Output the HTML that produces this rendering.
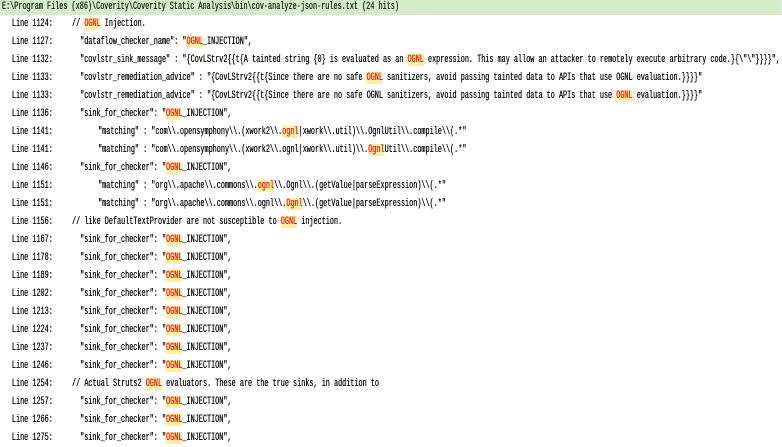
<!DOCTYPE html>
<html><head><meta charset="utf-8"><style>
html,body{margin:0;padding:0;background:#fff;width:782px;height:445px;overflow:hidden}
#w{position:absolute;left:0;top:0;width:1261px;transform:scaleX(0.62);transform-origin:0 0;font-family:"Liberation Mono",monospace;font-size:11px;color:#111;overflow:hidden;text-shadow:0.4px 0 0 currentColor}
.h{background:#d3ecc9;height:15px;line-height:15px;padding-left:3px;color:#1a2a1a;font-size:11px}
.l{height:18px;line-height:18px;white-space:pre;position:relative}
.n{position:absolute;left:19px}
.c{position:absolute;left:116px}
.c2{position:absolute;left:129px}
.c3{position:absolute;left:158px}
b{font-weight:normal;color:#e0241a;background:#fff0a0}
</style></head><body><div id="w">
<div class="h">E:\Program Files (x86)\Coverity\Coverity Static Analysis\bin\cov-analyze-json-rules.txt (24 hits)</div>
<div class="l"><span class="n">Line 1124:</span><span class="c">// <b>OGNL</b> Injection.</span></div>
<div class="l"><span class="n">Line 1127:</span><span class="c2">"dataflow_checker_name": "<b>OGNL</b>_INJECTION",</span></div>
<div class="l"><span class="n">Line 1132:</span><span class="c2">"covlstr_sink_message" : "{CovLStrv2{{t{A tainted string {0} is evaluated as an <b>OGNL</b> expression. This may allow an attacker to remotely execute arbitrary code.}{\"\"}}}}",</span></div>
<div class="l"><span class="n">Line 1133:</span><span class="c2">"covlstr_remediation_advice" : "{CovLStrv2{{t{Since there are no safe <b>OGNL</b> sanitizers, avoid passing tainted data to APIs that use OGNL evaluation.}}}}"</span></div>
<div class="l"><span class="n">Line 1133:</span><span class="c2">"covlstr_remediation_advice" : "{CovLStrv2{{t{Since there are no safe OGNL sanitizers, avoid passing tainted data to APIs that use <b>OGNL</b> evaluation.}}}}"</span></div>
<div class="l"><span class="n">Line 1136:</span><span class="c2">"sink_for_checker": "<b>OGNL</b>_INJECTION",</span></div>
<div class="l"><span class="n">Line 1141:</span><span class="c3">"matching" : "com\\.opensymphony\\.(xwork2\\.<b>ognl</b>|xwork\\.util)\\.OgnlUtil\\.compile\\(.*"</span></div>
<div class="l"><span class="n">Line 1141:</span><span class="c3">"matching" : "com\\.opensymphony\\.(xwork2\\.ognl|xwork\\.util)\\.<b>Ognl</b>Util\\.compile\\(.*"</span></div>
<div class="l"><span class="n">Line 1146:</span><span class="c2">"sink_for_checker": "<b>OGNL</b>_INJECTION",</span></div>
<div class="l"><span class="n">Line 1151:</span><span class="c3">"matching" : "org\\.apache\\.commons\\.<b>ognl</b>\\.Ognl\\.(getValue|parseExpression)\\(.*"</span></div>
<div class="l"><span class="n">Line 1151:</span><span class="c3">"matching" : "org\\.apache\\.commons\\.ognl\\.<b>Ognl</b>\\.(getValue|parseExpression)\\(.*"</span></div>
<div class="l"><span class="n">Line 1156:</span><span class="c">// like DefaultTextProvider are not susceptible to <b>OGNL</b> injection.</span></div>
<div class="l"><span class="n">Line 1167:</span><span class="c2">"sink_for_checker": "<b>OGNL</b>_INJECTION",</span></div>
<div class="l"><span class="n">Line 1178:</span><span class="c2">"sink_for_checker": "<b>OGNL</b>_INJECTION",</span></div>
<div class="l"><span class="n">Line 1189:</span><span class="c2">"sink_for_checker": "<b>OGNL</b>_INJECTION",</span></div>
<div class="l"><span class="n">Line 1202:</span><span class="c2">"sink_for_checker": "<b>OGNL</b>_INJECTION",</span></div>
<div class="l"><span class="n">Line 1213:</span><span class="c2">"sink_for_checker": "<b>OGNL</b>_INJECTION",</span></div>
<div class="l"><span class="n">Line 1224:</span><span class="c2">"sink_for_checker": "<b>OGNL</b>_INJECTION",</span></div>
<div class="l"><span class="n">Line 1237:</span><span class="c2">"sink_for_checker": "<b>OGNL</b>_INJECTION",</span></div>
<div class="l"><span class="n">Line 1246:</span><span class="c2">"sink_for_checker": "<b>OGNL</b>_INJECTION",</span></div>
<div class="l"><span class="n">Line 1254:</span><span class="c">// Actual Struts2 <b>OGNL</b> evaluators. These are the true sinks, in addition to</span></div>
<div class="l"><span class="n">Line 1257:</span><span class="c2">"sink_for_checker": "<b>OGNL</b>_INJECTION",</span></div>
<div class="l"><span class="n">Line 1266:</span><span class="c2">"sink_for_checker": "<b>OGNL</b>_INJECTION",</span></div>
<div class="l"><span class="n">Line 1275:</span><span class="c2">"sink_for_checker": "<b>OGNL</b>_INJECTION",</span></div>
</div></body></html>
